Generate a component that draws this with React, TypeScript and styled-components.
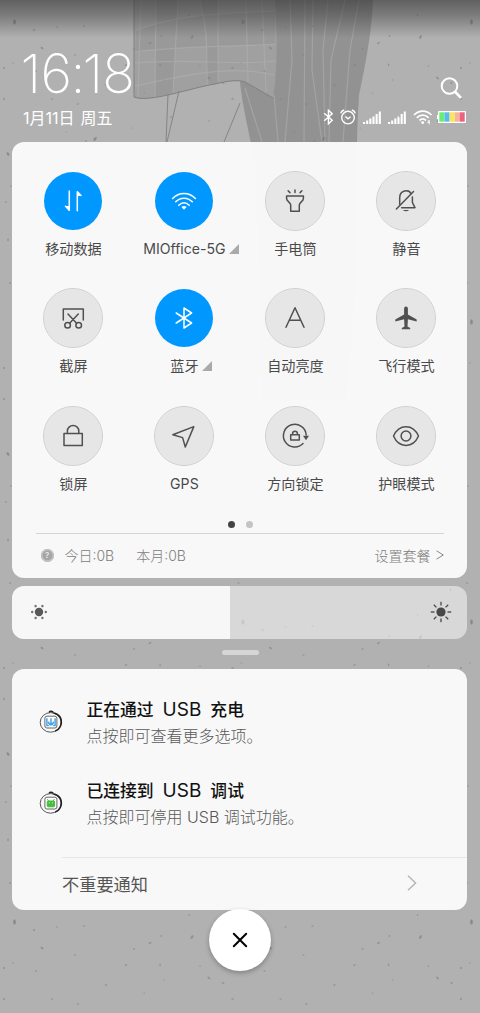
import React from "react";
import styled, { createGlobalStyle } from "styled-components";

const Global = createGlobalStyle`
  * { box-sizing: border-box; }
  body { margin: 0; background: #b0b0b0; }
`;

const cjk = `Inter, "Noto Sans CJK SC", sans-serif`;

const Screen = styled.main`
  position: relative;
  width: 480px;
  height: 1013px;
  padding-right: 1px;
  overflow: hidden;
  font-family: ${cjk};
  color: #4a4a4a;
  display: flex;
  flex-direction: column;
  align-items: center;
  isolation: isolate;
`;

const Backdrop = styled.svg`
  position: absolute;
  inset: 0;
  z-index: -1;
`;

const Header = styled.header`
  width: 100%;
  height: 142px;
  padding: 46px 13px 0 23px;
  display: flex;
  justify-content: space-between;
  color: #fff;
`;

const ClockColumn = styled.div`
  display: flex;
  flex-direction: column;
`;

const Clock = styled.div`
  height: 54px;
  margin-left: -2.5px;
  font: 200 54px/55px Inter, sans-serif;
  white-space: nowrap;
`;

const Glyph = styled.span<{ $track: number }>`
  letter-spacing: ${(p) => p.$track}px;
`;

const DateLine = styled.div`
  margin-top: 7px;
  font-size: 16px;
  line-height: 22px;
  word-spacing: 1.5px;
  white-space: pre;
`;

const StatusColumn = styled.div`
  display: flex;
  flex-direction: column;
  align-items: flex-end;
  padding-top: 31px;
`;

const SearchIcon = styled.svg`
  margin-right: 4px;
`;

const StatusRow = styled.div`
  display: flex;
  align-items: center;
  height: 20px;
  margin-top: 8px;
`;

const StatusIcon = styled.svg<{ $gap: number }>`
  margin-right: ${(p) => p.$gap}px;
`;

const Card = styled.section<{ $h: number }>`
  width: 455px;
  height: ${(p) => p.$h}px;
  flex: none;
  border-radius: 12px;
  background: rgba(250, 250, 250, 0.972);
`;

const Tiles = styled.div`
  display: grid;
  grid-template-columns: repeat(4, 111px);
  grid-auto-rows: 117.3px;
  padding: 29px 0 0 5.9px;
  height: 374px;
`;

const Tile = styled.div`
  display: flex;
  flex-direction: column;
  align-items: center;
`;

const Disc = styled.div<{ $on?: boolean }>`
  width: 60px;
  height: 60px;
  border-radius: 50%;
  border: 1px solid ${(p) => (p.$on ? "transparent" : "#cfcfcf")};
  background: ${(p) => (p.$on ? "#0098ff" : "#e6e6e6")};
  background-clip: padding-box;
  color: ${(p) => (p.$on ? "#fff" : "#505050")};
  display: flex;
  align-items: center;
  justify-content: center;
`;

const TileLabel = styled.div`
  position: relative;
  margin-top: 7px;
  font-size: 14.1px;
  line-height: 22px;
  white-space: nowrap;
`;

const Corner = styled.svg`
  position: absolute;
  left: 100%;
  top: 6px;
  margin-left: 3.5px;
`;

const Dots = styled.div`
  display: flex;
  justify-content: center;
  gap: 11px;
  padding: 4.5px 0 0 1px;
  height: 17px;
`;

const Dot = styled.i<{ $active?: boolean }>`
  width: 7px;
  height: 7px;
  border-radius: 50%;
  background: ${(p) => (p.$active ? "#444" : "#c4c4c4")};
`;

const Usage = styled.div`
  margin: 0 23.5px;
  height: 43px;
  border-top: 1px solid #d5d5d5;
  display: flex;
  align-items: center;
  padding: 0 0 0 5px;
  font-size: 14px;
  font-weight: 300;
  color: #808080;
`;

const Help = styled.span`
  width: 13px;
  height: 13px;
  border-radius: 50%;
  background: #a6a6a6;
  box-shadow: inset 0 0 0 1.5px #c4c4c4;
  color: #eee;
  font-size: 8px;
  font-weight: 500;
  line-height: 13px;
  text-align: center;
`;

const Amount = styled.span<{ $gap: number }>`
  margin-left: ${(p) => p.$gap}px;
`;

const PlanLink = styled.span`
  margin-left: auto;
  display: flex;
  align-items: center;
  gap: 5px;
`;

const Brightness = styled(Card)`
  margin-top: 8px;
  background: linear-gradient(90deg, #f7f7f7 218px, rgba(255, 255, 255, 0.5) 218px);
  display: flex;
  align-items: center;
  justify-content: space-between;
  padding: 0 15.5px 1px;
`;

const Handle = styled.div`
  width: 37px;
  height: 5px;
  border-radius: 3px;
  background: #d6d6d6;
  margin: 11px 0 14px 1px;
  flex: none;
`;

const Notifications = styled(Card)`
  padding-top: 28px;
`;

const Notice = styled.article`
  display: flex;
  height: 81.3px;
  padding-left: 27px;
`;

const NoticeIcon = styled.svg`
  margin: 12px 21.5px 0 0;
`;

const NoticeTitle = styled.h2`
  margin: 0;
  font-size: 16.8px;
  line-height: 26px;
  font-weight: 500;
  color: #111;
  word-spacing: 4.5px;
`;

const NoticeTitleLatin = styled.span`
  font-weight: 400;
  font-size: 19px;
  line-height: 20px;
`;

const NoticeBody = styled.p`
  margin: 0;
  font-size: 16px;
  line-height: 26px;
  font-weight: 300;
  color: #585858;
`;

const MoreRow = styled.div`
  margin: -3px 0 0 50px;
  height: 54px;
  border-top: 1px solid #e6e6e6;
  display: flex;
  align-items: center;
  justify-content: space-between;
  padding: 0 50px 2px 0;
  font-size: 17.2px;
  color: #555;
`;

const CloseButton = styled.button`
  width: 62px;
  height: 62px;
  flex: none;
  margin: -1px 0 0 1px;
  padding: 0;
  border: 0;
  border-radius: 50%;
  background: #fff;
  box-shadow: 0 2px 5px rgba(0, 0, 0, 0.28);
  display: flex;
  align-items: center;
  justify-content: center;
`;

const specks: [number, number, number, number, number][] = [
  [14.5, 22, 1.7, 4, 0], [34, 30, 0.9, 1.8, 10], [57, 27, 0.7, 1.6, 0], [84, 26, 0.8, 1.4, 0],
  [42, 48, 2, 1.1, 35], [75, 55, 0.7, 1.6, 10], [134, 49, 0.8, 1.6, 20], [150, 43, 2, 1, -35],
  [161, 36, 0.8, 1.4, 10], [189, 15, 0.7, 1.4, 0], [192, 37, 1.2, 3, 24], [160, 65, 0.7, 2, 0],
  [126, 65, 1.6, 0.9, -40], [200, 66, 1.1, 0.8, 0], [36, 71, 1.2, 1, 0], [13, 63, 0.7, 1, 0],
  [106, 85, 0.8, 2, -15], [209, 78, 2.2, 1, 45], [223, 83, 1.6, 1, 20], [164, 80, 0.6, 1.1, 0],
  [4, 99, 0.8, 1.9, 0], [52, 99, 0.7, 1.4, 0], [78, 104, 1.5, 0.8, -30], [144, 93, 0.6, 1.2, 0],
  [95, 139, 1.5, 3.3, 35], [86, 141, 0.8, 1.4, 0], [66, 132, 1, 0.7, 0], [132, 128, 0.9, 0.6, 0],
  [171, 117, 1, 1.6, 0], [209, 121, 0.8, 1, 0], [4, 68, 1, 1.5, 0], [8, 154, 1.5, 2.8, -30],
  [220, 160, 0.8, 2, 0], [11, 186, 0.8, 1.2, 0], [6, 202, 0.8, 1.4, 0], [225, 208, 1.4, 3, 10],
  [8, 240, 0.8, 2, 0], [221, 250, 1, 0.8, 0], [10, 283, 0.8, 1.6, 0], [222, 290, 0.8, 2, 0],
];

function Wallpaper() {
  return (
    <Backdrop width="480" height="1013" viewBox="0 0 480 1013">
      <defs>
        <pattern id="specks" width="228.5" height="300" patternUnits="userSpaceOnUse">
          {specks.map(([x, y, rx, ry, a], i) => (
            <ellipse key={i} cx={x} cy={y} rx={rx * 0.8} ry={ry * 0.7} transform={`rotate(${a} ${x} ${y})`} fill="#777" opacity=".68" />
          ))}
        </pattern>
        <linearGradient id="shade" x1="0" y1="0" x2="0" y2="1">
          <stop offset="0" stopColor="#333" stopOpacity=".64" />
          <stop offset=".4" stopColor="#333" stopOpacity=".42" />
          <stop offset="1" stopColor="#333" stopOpacity="0" />
        </linearGradient>
      </defs>
      <rect width="480" height="1013" fill="#b1b1b1" />
      <path d="M240 82 C243 110 249 130 256 170 L262 400 H345 C362 280 353 180 359 95 C366 62 372 30 373 0 H270Z" fill="#929292" />
      <path d="M150 220 L134 330 C105 360 110 410 120 390 L220 400 L190 220Z" fill="#a2a2a2" />
      <path d="M134 0 V97 C150 103 190 88 215 84 C230 80 240 80 245 82 L273 98 C278 70 277 30 275 0Z" fill="#a0a0a0" />
      <g fill="#8b8b8b" opacity=".3">
        <path d="M156 0 H178 L173 93 L155 97Z M200 0 H218 V83 L208 85 C205 60 210 40 200 0Z M136 30 C180 14 220 14 275 11 V44 C230 47 180 46 135 52Z" />
      </g>
      <path d="M134 0 V97 C150 103 190 88 215 84 C230 80 240 80 245 82 L273 98" fill="none" stroke="#808080" strokeWidth="1" />
      <g stroke="#b4b4b4" strokeWidth="1.2" fill="none" opacity=".5">
        <path d="M141 0 L138 97 M156 0 L155 97 M178 0 L173 93 M200 0 C210 40 205 60 208 85 M218 0 V82 M246 0 L248 82 M262 0 L266 92" />
        <path d="M136 30 C180 14 220 14 275 11 M135 52 C180 46 230 47 276 44 M135 63 C190 58 230 66 276 61 M135 86 C180 76 230 64 274 75" />
        <path d="M290 0 L292 60 L285 142 M305 0 L304 142 M313 0 L312 70 L322 142 M328 0 L323 50 L325 142 M345 0 L331 60 L329 142 M359 0 L350 50 L343 142 M245 88 L262 142 M274 95 L278 142" />
      </g>
      <path d="M168 94 L166 142 M179 91 L167 142 M240 103 L224 142" fill="none" stroke="#858585" strokeWidth="1" />
      <rect width="480" height="900" fill="url(#specks)" />
      <g transform="translate(0 900)">
        <rect width="480" height="113" fill="url(#specks)" />
      </g>
      <rect width="480" height="38" fill="url(#shade)" />
    </Backdrop>
  );
}

const icons: Record<string, React.ReactNode> = {
  data: (
    <>
      <path d="M-3.7 -10 V9.3 L-7.5 5.3 M4.3 9.8 V-9.3 L8 -5.5" />
      <path d="M-4 5 V9.8 L-8 5Z M4.6 -5 V-9.8 L8.6 -5Z" fill="currentColor" stroke="none" />
    </>
  ),
  wifi: (
    <>
      <path d="M-11.4 -2.6 C-5 -9.3 5 -9.3 11.4 -2.6 M-8.3 .8 C-3.5 -4 3.5 -4 8.3 .8 M-5.2 4.2 C-2 1.2 2 1.2 5.2 4.2" />
      <path d="M-2.6 6 Q0 3.9 2.6 6 L0 8.7Z" fill="currentColor" stroke="none" />
    </>
  ),
  torch: <path d="M-8.4 -5 H8.4 V-2.6 C8.4 .6 4.3 1 4.3 4 V10.3 H-4.3 V4 C-4.3 1 -8.4 .6 -8.4 -2.6Z M0 -11 V-8.4 M-6.9 -10.2 L-5.1 -8.4 M6.9 -10.2 L5.1 -8.4" />,
  mute: (
    <>
      <path d="M-6.3 3.3 V-3.2 C-6.3 -11 3 -12 5 -7.2 M6.4 -4 V1.5 L9 6.7 H-4.4" />
      <path d="M-9.6 8 L7.5 -9.5" />
      <path d="M-3.2 9 Q0 11.5 3.2 9Z" fill="currentColor" stroke="none" />
    </>
  ),
  shot: (
    <>
      <path d="M-9.7 2 V-9 H10.3 V2 M-5 -4 L3.6 5.2 M5.3 -4 L-3.4 5.2" />
      <circle cx="-5.4" cy="7.3" r="2.8" />
      <circle cx="5.7" cy="7.3" r="2.8" />
    </>
  ),
  bluetooth: <path d="M-7.8 -5 L7.6 5 L0 10 V-10 L7.6 -5 L-7.8 5" />,
  auto: <path d="M-9 9.3 L0 -10.3 L9 9.3 M-5.8 2.2 H5.8" />,
  plane: <path d="M0 -11.5 C1.5 -11.5 1.9 -10.3 1.9 -9 V-3.4 L10.7 1.6 V3.5 L1.9 1.3 L1.5 8.6 L4.2 10 V11.2 H-4.2 V10 L-1.5 8.6 L-1.9 1.3 L-10.7 3.5 V1.6 L-1.9 -3.4 V-9 C-1.9 -10.3 -1.5 -11.5 0 -11.5Z" fill="currentColor" stroke="none" />,
  lock: <path d="M-9 -2.4 H9.3 V9.6 H-9Z M-5.6 -2.4 V-5 A5.7 5.5 0 0 1 5.8 -5 V-2.4" />,
  gps: <path d="M9.8 -9.4 L-11.2 -1.3 L-1.4 1.6 L1.3 11Z" />,
  rotate: (
    <>
      <path d="M11.2 -1 A11.4 11.4 0 1 0 8 7.6 M-4.3 -1.2 H4.3 V4 H-4.3Z M-2.4 -1.2 V-2.4 A2.4 2.4 0 0 1 2.4 -2.4 V-1.2" />
      <path d="M8 -.2 H14 L11 4.3Z" fill="currentColor" stroke="none" />
    </>
  ),
  eye: (
    <>
      <path d="M-12.5 0 C-7 -12.5 7 -12.5 12.5 0 C7 12.5 -7 12.5 -12.5 0Z" />
      <circle r="4.9" />
    </>
  ),
};

function TileIcon({ name }: { name: string }) {
  return (
    <svg width="40" height="40" viewBox="-20 -20 40 40" fill="none" stroke="currentColor" strokeWidth="1.5" strokeLinejoin="round" strokeLinecap="round">
      {icons[name]}
    </svg>
  );
}

const tiles: { icon: string; label: string; on?: boolean; more?: boolean }[] = [
  { icon: "data", label: "移动数据", on: true },
  { icon: "wifi", label: "MIOffice-5G", on: true, more: true },
  { icon: "torch", label: "手电筒" },
  { icon: "mute", label: "静音" },
  { icon: "shot", label: "截屏" },
  { icon: "bluetooth", label: "蓝牙", on: true, more: true },
  { icon: "auto", label: "自动亮度" },
  { icon: "plane", label: "飞行模式" },
  { icon: "lock", label: "锁屏" },
  { icon: "gps", label: "GPS" },
  { icon: "rotate", label: "方向锁定" },
  { icon: "eye", label: "护眼模式" },
];

function Signal() {
  return (
    <StatusIcon $gap={7} width="18" height="13" viewBox="0 0 18 13" fill="#fff">
      {[2, 3.5, 5.5, 7.5, 10, 12.5].map((h, i) => (
        <rect key={h} x={i * 3.15} y={13 - h} width="2.1" height={h} />
      ))}
    </StatusIcon>
  );
}

function Sun({ full }: { full?: boolean }) {
  const angles = full ? [0, 45, 90, 135, 180, 225, 270, 315] : [0, 60, 120, 180, 240, 300];
  return (
    <svg width="22" height="22" viewBox="-11 -11 22 22" fill={full ? "#484848" : "#585858"}>
      <circle r={full ? 4.6 : 4.2} />
      {angles.map((a) =>
        full ? (
          <rect key={a} x="6.5" y="-.65" width="3.7" height="1.3" transform={`rotate(${a})`} />
        ) : (
          <circle key={a} cx="6.8" r="1.2" transform={`rotate(${a})`} opacity=".85" />
        )
      )}
    </svg>
  );
}

function Badge({ color, children }: { color: string; children: React.ReactNode }) {
  return (
    <NoticeIcon width="26" height="26" viewBox="0 0 26 26" fill="none">
      <ellipse cx="11.6" cy="13.4" rx="10.4" ry="9.8" stroke="#444" strokeWidth=".9" />
      <path d="M14.5 4 C20.5 4.8 23.5 10 22 15.7 C21 19.2 18.5 21.2 16 22.1" stroke="#222" strokeWidth="1.5" />
      <path d="M10 3.3 C11 1.8 13.5 2 14.4 3.7" stroke="#222" strokeWidth="1.4" />
      <rect x="5.9" y="7.2" width="12" height="11.8" rx="2" fill="#fff" stroke="#666" strokeWidth="1" />
      <g stroke={color} fill={color} transform="translate(-.7 .4)">{children}</g>
    </NoticeIcon>
  );
}

export default function App() {
  return (
    <Screen>
      <Global />
      <Wallpaper />
      <Header>
        <ClockColumn>
          <Clock>
            <Glyph $track={-0.5}>1</Glyph>
            <Glyph $track={-1.5}>6</Glyph>
            <Glyph $track={-3}>:</Glyph>
            <Glyph $track={-0.8}>1</Glyph>
            <Glyph $track={0}>8</Glyph>
          </Clock>
          <DateLine>1月11日 周五</DateLine>
        </ClockColumn>
        <StatusColumn>
          <SearchIcon width="22" height="22" viewBox="0 0 22 22" fill="none" stroke="#fff" strokeWidth="2">
            <circle cx="9.5" cy="9" r="7.8" />
            <path d="M14.8 14.5 L21 20.8" strokeWidth="2.6" />
          </SearchIcon>
          <StatusRow>
            <StatusIcon $gap={7} width="10" height="16" viewBox="0 0 10 16" fill="none" stroke="#fff" strokeWidth="1.4">
              <path d="M1.2 4.2 L9.2 11.3 L5.4 14.8 V1.2 L9.2 4.7 L1.2 11.8" />
            </StatusIcon>
            <StatusIcon $gap={7} width="16" height="16" viewBox="0 0 16 16" fill="none" stroke="#fff" strokeWidth="1.4">
              <circle cx="8" cy="8.6" r="6.3" />
              <path d="M.7 4.2 Q1.5 1.7 4.2 1 M15.3 4.2 Q14.5 1.7 11.8 1 M5.5 7.5 L8 9.8 L10.6 7.8" />
            </StatusIcon>
            <Signal />
            <Signal />
            <StatusIcon $gap={4} width="20" height="16" viewBox="0 0 20 16" fill="none" stroke="#fff" strokeWidth="1.8">
              <path d="M1 6 C6 .7 13.5 .7 18.5 6 M3.8 8.8 C7.3 5.2 12.2 5.2 15.7 8.8 M6.5 11.5 C8.6 9.5 11 9.5 13 11.5" />
              <circle cx="9.7" cy="13.4" r="1.5" fill="#fff" stroke="none" />
              <path d="M15.8 11 L14.6 13.5 H17 M16.2 11 V15.5" strokeWidth=".8" />
            </StatusIcon>
            <svg width="29" height="12" viewBox="0 0 29 12">
              <rect x="0" y="4" width="2" height="4" fill="#fff" />
              <rect x="1" y="0" width="28" height="12" rx="1" fill="#fff" />
              <rect x="2.3" y="1.3" width="5.3" height="9.4" fill="#69ee75" />
              <rect x="7.6" y="1.3" width="5" height="9.4" fill="#5ab9f5" />
              <rect x="12.6" y="1.3" width="5.2" height="9.4" fill="#f8e75c" />
              <rect x="17.8" y="1.3" width="4.9" height="9.4" fill="#fab39a" />
              <rect x="22.7" y="1.3" width="5" height="9.4" fill="#ea6480" />
            </svg>
          </StatusRow>
        </StatusColumn>
      </Header>

      <Card $h={435.5}>
        <Tiles>
          {tiles.map((t) => (
            <Tile key={t.icon}>
              <Disc $on={t.on}>
                <TileIcon name={t.icon} />
              </Disc>
              <TileLabel>
                {t.label}
                {t.more && (
                  <Corner width="10" height="10" viewBox="0 0 10 10">
                    <path d="M0 10 L10 0 V10Z" fill="#aaa" />
                  </Corner>
                )}
              </TileLabel>
            </Tile>
          ))}
        </Tiles>
        <Dots>
          <Dot $active />
          <Dot />
        </Dots>
        <Usage>
          <Help>?</Help>
          <Amount $gap={11}>今日:0B</Amount>
          <Amount $gap={22}>本月:0B</Amount>
          <PlanLink>
            设置套餐
            <svg width="8" height="10" viewBox="0 0 8 10" fill="none" stroke="#888" strokeWidth="1">
              <path d="M.5 .8 L7.3 5 L.5 9.2" />
            </svg>
          </PlanLink>
        </Usage>
      </Card>

      <Brightness $h={53.5}>
        <Sun />
        <Sun full />
      </Brightness>
      <Handle />

      <Notifications $h={241}>
        <Notice>
          <Badge color="#3d9fe8">
            <path d="M8.6 8.8 V16.2 H10.6 M16.8 8.8 V16.2 H14.8 M12.7 8.8 V16 M10.2 12.2 Q10.5 15 12.7 15.5 Q14.9 15 15.2 12.2" fill="none" strokeWidth="1.4" />
          </Badge>
          <div>
            <NoticeTitle>正在通过 <NoticeTitleLatin>USB</NoticeTitleLatin> 充电</NoticeTitle>
            <NoticeBody>点按即可查看更多选项。</NoticeBody>
          </div>
        </Notice>
        <Notice>
          <Badge color="#45bd3c">
            <path d="M9 8.8 L10.4 10.6 M16 8.8 L14.8 10.6" />
            <rect x="8.9" y="10.6" width="7.4" height="5.8" rx="1" />
            <path d="M10.5 12.5 H11.3 M13.6 12.5 H14.4" stroke="#fff" />
          </Badge>
          <div>
            <NoticeTitle>已连接到 <NoticeTitleLatin>USB</NoticeTitleLatin> 调试</NoticeTitle>
            <NoticeBody>点按即可停用 USB 调试功能。</NoticeBody>
          </div>
        </Notice>
        <MoreRow>
          不重要通知
          <svg width="10" height="16" viewBox="0 0 10 16" fill="none" stroke="#b5b5b5" strokeWidth="1.4">
            <path d="M1 .8 L8.6 8 L1 15.2" />
          </svg>
        </MoreRow>
      </Notifications>

      <CloseButton aria-label="关闭">
        <svg width="16" height="16" viewBox="0 0 16 16" stroke="#000" strokeWidth="2" strokeLinecap="round">
          <path d="M1.8 1.8 L14.2 14.2 M14.2 1.8 L1.8 14.2" />
        </svg>
      </CloseButton>
    </Screen>
  );
}
